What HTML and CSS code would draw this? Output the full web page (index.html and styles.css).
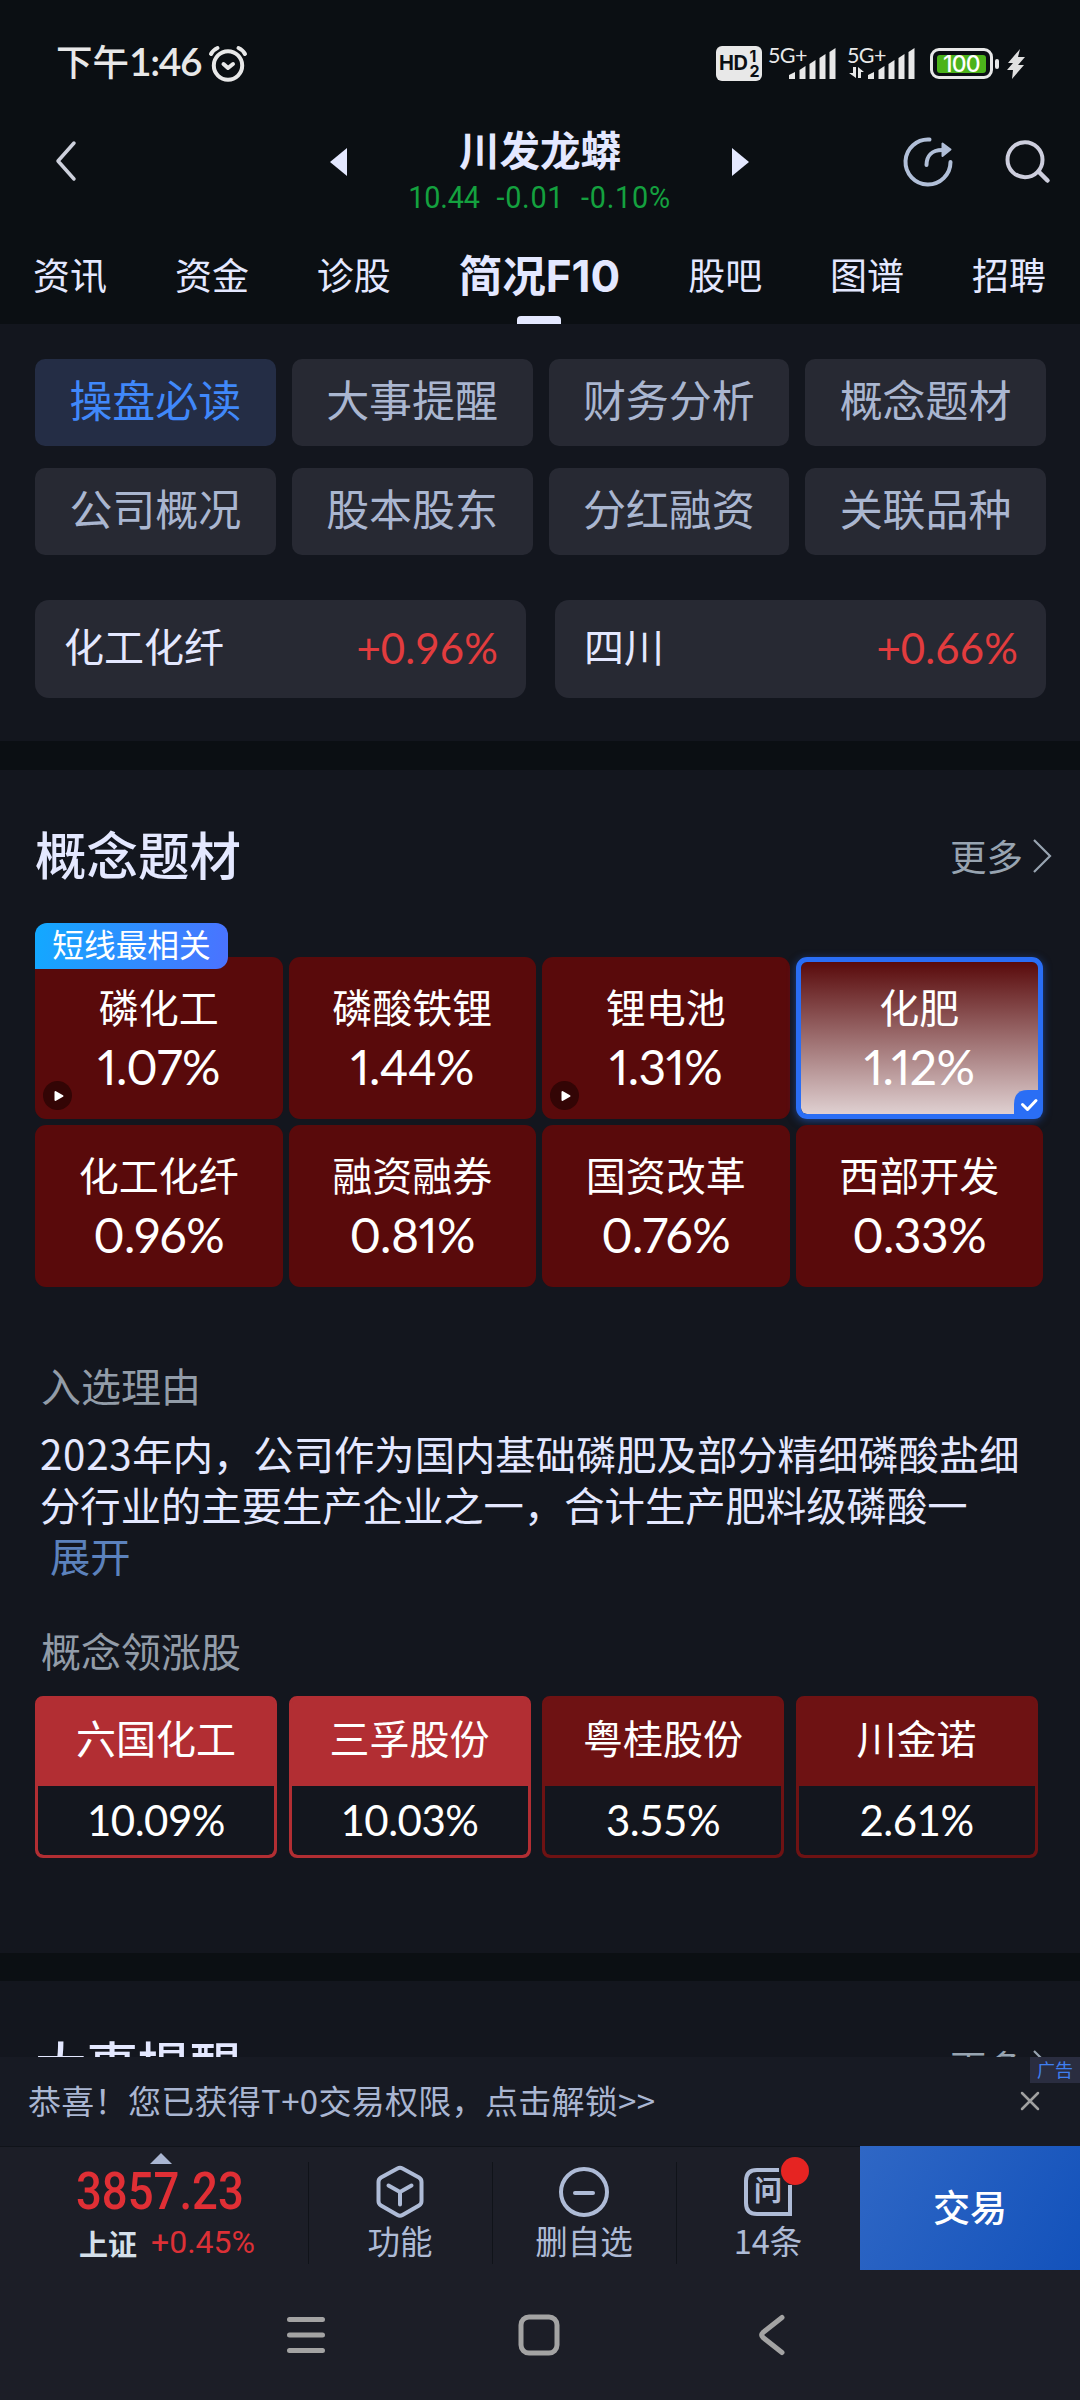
FILE: index.html
```html
<!DOCTYPE html>
<html lang="zh-CN">
<head>
<meta charset="utf-8">
<title>川发龙蟒 - 简况F10</title>
<link rel="stylesheet" href="styles.css">
</head>
<body>
<div class="screen">
  <header class="top">
    <div class="status">
      <div class="clock">下午<span class="clock-num">1:46</span></div>
      <svg class="alarm" width="40" height="38" viewBox="0 0 40 38" fill="none" stroke="#e8e8e8" stroke-linecap="round" stroke-linejoin="round"><circle cx="20" cy="20.5" r="14.2" stroke-width="4"/><path d="M3 9Q5 5 9.500 3M37 9Q35 5 30.500 3" stroke-width="4"/><path d="M15.500 19l4.500 4 5-4" stroke-width="4"/></svg>
      <div class="status-icons">
        <div class="hd"><span>HD</span><div class="hd-sims"><i>1</i><i>2</i></div></div>
        <div class="net"><span>5G+</span><svg width="70" height="36" viewBox="0 0 70 36" fill="#e8e8e8"><path d="M21 29l6-3v7h-6zM31.500 24l6-4v13h-6zM41.500 18l6-4v19h-6zM51.500 12l6-4v25h-6zM61.500 6l6-4v31h-6z"/></svg></div>
        <div class="net"><span>5G+</span><svg width="70" height="36" viewBox="0 0 70 36" fill="#e8e8e8"><path d="M21 29l6-3v7h-6zM31.500 24l6-4v13h-6zM41.500 18l6-4v19h-6zM51.500 12l6-4v25h-6zM61.500 6l6-4v31h-6zM6 21h3v11L2 27h4zM11 32V21l6 5h-3v6z"/></svg></div>
        <div class="battery"><div class="battery-fill">100</div></div>
        <svg class="bolt" width="20" height="32" viewBox="0 0 20 32" fill="#e0e0e0"><path d="M14 1L2 15h5L1 22h6L6 31 18 17h-6l7-8h-7z"/></svg>
      </div>
    </div>
    <div class="titlebar">
      <svg class="back" width="24" height="44" viewBox="0 0 24 44" fill="none" stroke="#cdd0dc" stroke-width="3.500" stroke-linecap="round" stroke-linejoin="round"><path d="M20 4L4 22l16 18"/></svg>
      <svg class="prev" width="17" height="28" viewBox="0 0 17 28"><path d="M17 0v28L0 14z" fill="#e4e8ff"/></svg>
      <div class="stock">
        <h1>川发龙蟒</h1>
        <div class="quote"><span>10.44</span><span>-0.01</span><span>-0.10%</span></div>
      </div>
      <svg class="next" width="17" height="28" viewBox="0 0 17 28"><path d="M0 0v28l17-14z" fill="#e4e8ff"/></svg>
      <svg class="share" width="52" height="52" viewBox="0 0 52 52" fill="none" stroke="#b1bfd8" stroke-width="4" stroke-linecap="round"><path d="M27.500 3.500A22.500 22.500 0 1 0 48.500 26"/><path d="M24.500 29C24.500 20 30 14 40 14"/><path d="M40.500 7.500v12.500l8-6.500z" fill="#b1bfd8" stroke-width="2" stroke-linejoin="round"/></svg>
      <svg class="search" width="48" height="46" viewBox="0 0 48 46" fill="none" stroke="#cdcedd" stroke-width="4" stroke-linecap="round"><circle cx="21" cy="20.700" r="17.500"/><path d="M35 33l8.500 8.500" stroke-width="4.500"/></svg>
    </div>
    <nav class="tabs">
      <span>资讯</span><span>资金</span><span>诊股</span><span class="tab-on">简况<b>F10</b></span><span>股吧</span><span>图谱</span><span>招聘</span>
    </nav>
  </header>

  <main>
    <section class="menu">
      <div class="chips">
        <span class="chip chip-on">操盘必读</span><span class="chip">大事提醒</span><span class="chip">财务分析</span><span class="chip">概念题材</span>
        <span class="chip">公司概况</span><span class="chip">股本股东</span><span class="chip">分红融资</span><span class="chip">关联品种</span>
      </div>
      <div class="boards">
        <div class="board"><span>化工化纤</span><em>+0.96%</em></div>
        <div class="board"><span>四川</span><em>+0.66%</em></div>
      </div>
    </section>

    <section class="concept">
      <div class="section-head"><h2>概念题材</h2><span class="more">更多<svg width="19" height="34" viewBox="0 0 19 34" fill="none" stroke="#98a4b1" stroke-width="2.200"><path d="M1 1l16 16L1 33"/></svg></span></div>
      <div class="tiles">
        <div class="tile"><span class="badge">短线最相关</span><span class="tile-name">磷化工</span><span class="tile-pct">1.07%</span><svg class="play" width="29" height="29" viewBox="0 0 29 29"><circle cx="14.500" cy="14.500" r="14.500" fill="#330505"/><path d="M12.500 11v8l7-4z" fill="#fff" stroke="#fff" stroke-width="2" stroke-linejoin="round"/></svg></div>
        <div class="tile"><span class="tile-name">磷酸铁锂</span><span class="tile-pct">1.44%</span></div>
        <div class="tile"><span class="tile-name">锂电池</span><span class="tile-pct">1.31%</span><svg class="play" width="29" height="29" viewBox="0 0 29 29"><circle cx="14.500" cy="14.500" r="14.500" fill="#330505"/><path d="M12.500 11v8l7-4z" fill="#fff" stroke="#fff" stroke-width="2" stroke-linejoin="round"/></svg></div>
        <div class="tile tile-on"><span class="tile-name">化肥</span><span class="tile-pct">1.12%</span><svg class="check" width="29" height="29" viewBox="0 0 29 29"><path d="M0 29V14Q0 0 14 0H29V19Q29 29 19 29z" fill="#2a6ef5"/><path d="M8.500 14.500l5 5 8.500-9" fill="none" stroke="#fff" stroke-width="3" stroke-linecap="round" stroke-linejoin="round"/></svg></div>
        <div class="tile"><span class="tile-name">化工化纤</span><span class="tile-pct">0.96%</span></div>
        <div class="tile"><span class="tile-name">融资融券</span><span class="tile-pct">0.81%</span></div>
        <div class="tile"><span class="tile-name">国资改革</span><span class="tile-pct">0.76%</span></div>
        <div class="tile"><span class="tile-name">西部开发</span><span class="tile-pct">0.33%</span></div>
      </div>
      <h3>入选理由</h3>
      <p class="reason"><span class="year">2023</span>年内，公司作为国内基础磷肥及部分精细磷酸盐细<br>分行业的主要生产企业之一，合计生产肥料级磷酸一<br><a>展开</a></p>
      <h3 class="leaders-title">概念领涨股</h3>
      <div class="leaders">
        <div class="leader leader-hot"><span>六国化工</span><em>10.09%</em></div>
        <div class="leader leader-hot"><span>三孚股份</span><em>10.03%</em></div>
        <div class="leader"><span>粤桂股份</span><em>3.55%</em></div>
        <div class="leader"><span>川金诺</span><em>2.61%</em></div>
      </div>
    </section>

    <section class="events">
      <div class="section-head"><h2>大事提醒</h2><span class="more">更多<svg width="19" height="34" viewBox="0 0 19 34" fill="none" stroke="#98a4b1" stroke-width="2.200"><path d="M1 1l16 16L1 33"/></svg></span></div>
    </section>
  </main>

  <footer>
    <div class="promo">
      <span>恭喜！您已获得T+0交易权限，点击解锁&gt;&gt;</span>
      <svg width="20" height="20" viewBox="0 0 20 20" stroke="#a0a0a0" stroke-width="2.500" stroke-linecap="round"><path d="M2 2l16 16M18 2L2 18"/></svg>
      <i class="ad">广告</i>
    </div>
    <div class="actions">
      <div class="index">
        <svg width="22" height="11" viewBox="0 0 22 11"><path d="M11 0l11 11H0z" fill="#aab6d2"/></svg>
        <strong>3857.23</strong>
        <div class="index-row"><span>上证</span><em>+0.45%</em></div>
      </div>
      <div class="action">
        <svg width="54" height="54" viewBox="0 0 54 54" fill="none" stroke="#aebbd6" stroke-width="4" stroke-linecap="round" stroke-linejoin="round"><path d="M24.500 3.500Q27 2.200 29.500 3.500L46 12.500Q48.500 14 48.500 17V36Q48.500 39 46 40.500L29.500 50Q27 51.500 24.500 50L8 40.500Q5.500 39 5.500 36V17Q5.500 14 8 12.500z"/><path d="M15.500 20.500L27 27l11.500-6.500M27 27v12.500"/></svg>
        <span>功能</span>
      </div>
      <div class="action">
        <svg width="54" height="54" viewBox="0 0 54 54" fill="none" stroke="#aebbd6" stroke-width="4" stroke-linecap="round"><circle cx="27" cy="27" r="23"/><path d="M18 28h18"/></svg>
        <span>删自选</span>
      </div>
      <div class="action">
        <div class="ask"><svg width="54" height="54" viewBox="0 0 54 54" fill="none" stroke="#aebbd6" stroke-width="4"><path d="M49 20V49H16Q5 49 5 38V16Q5 5 16 5H38"/></svg><b>问</b><i></i></div>
        <span>14条</span>
      </div>
      <div class="trade">交易</div>
    </div>
    <div class="sysnav">
      <svg width="40" height="42" viewBox="0 0 40 42" stroke="#a3a3a3" stroke-width="5" stroke-linecap="round"><path d="M3.500 5.500h33M3.500 21h33M3.500 36.500h33"/></svg>
      <svg width="42" height="42" viewBox="0 0 42 42" fill="none" stroke="#a3a3a3" stroke-width="5"><rect x="3" y="3" width="36" height="36" rx="8"/></svg>
      <svg width="28" height="42" viewBox="0 0 28 42" fill="none" stroke="#a3a3a3" stroke-width="5" stroke-linecap="round" stroke-linejoin="round"><path d="M24 3.500L5 18.500Q2.500 21 5 23.500L24 38.500"/></svg>
    </div>
  </footer>
</div>
</body>
</html>
```
FILE: styles.css
```css
* { box-sizing: border-box; }
body {
  margin: 0;
  background: #13161e;
  color: #e4e8ff;
  font-family: "Noto Sans CJK SC", sans-serif;
}
h1, h2, h3, p { margin: 0; font-weight: 500; }
em, i { font-style: normal; }
svg { display: block; flex: none; }
.screen {
  width: 1080px;
  height: 2400px;
  display: flex;
  flex-direction: column;
  overflow: hidden;
}

/* top area */
.top { flex: none; height: 324px; background: #0b0f13; }
.status {
  height: 123px;
  padding: 2px 54px 0 56px;
  display: flex;
  align-items: center;
  color: #e8e8e8;
}
.clock { font-size: 36.5px; font-weight: 500; line-height: 50px; white-space: nowrap; width: 152px; margin-top: -3px; }
.clock-num { font-family: Lato, sans-serif; font-size: 39px; font-weight: 600; letter-spacing: -1.4px; }
.alarm { margin-top: 2px; }
.status-icons { margin-left: auto; display: flex; align-items: center; height: 36px; margin-top: 2px; }
.hd {
  width: 46px; height: 35px; border-radius: 6px;
  background: #e8e8e8; color: #0b0f13;
  display: flex; align-items: center; justify-content: center; gap: 2px;
  font: 700 20px/35px Inter, sans-serif; letter-spacing: -.5px;
  margin-right: 6px;
}
.hd-sims { display: grid; font-size: 16px; line-height: 15px; }
.net { position: relative; width: 70px; height: 36px; margin-right: 9px; }
.net span { position: absolute; left: 0; top: 0; font: 400 21.500px/18px Lato, sans-serif; letter-spacing: -.6px; }
.battery {
  position: relative; width: 63px; height: 31px; padding: 4px;
  border: 3px solid #e8e8e8; border-radius: 9px; margin: 0 13px 0 4px;
}
.battery::after { content: ""; position: absolute; left: 62px; top: 8px; width: 4px; height: 10px; border-radius: 2px; background: #e8e8e8; }
.battery-fill {
  height: 18px; border-radius: 3px; background: #4cb31b; color: #fff;
  font: 500 23px/19px Inter, sans-serif; text-align: center; letter-spacing: -.8px;
}

.titlebar { height: 107px; padding: 0 20px 0 54px; display: flex; align-items: flex-start; }
.back { margin-top: 16px; margin-right: 252px; }
.prev { margin-top: 25px; }
.next { margin-top: 25px; }
.stock { flex: none; width: 385px; text-align: center; }
.stock h1 { font-size: 40.500px; line-height: 50px; font-weight: 700; margin-top: 1px; padding-left: 1px; }
.quote {
  display: flex; justify-content: center; gap: 18px;
  color: #14a13f; font: 400 31px/34px Roboto, sans-serif; letter-spacing: .8px;
  margin-top: 7px; transform: scaleX(.93);
}
.quote span:first-child { letter-spacing: -.2px; }
.share { margin: 13px 0 0 153px; }
.search { margin: 16px 0 0 50px; }

.tabs { height: 94px; padding: 0 34px 0 33px; display: flex; justify-content: space-between; font-size: 37px; line-height: 88px; }
.tab-on { position: relative; font-size: 43.500px; font-weight: 700; white-space: nowrap; }
.tab-on b { font-family: Inter, sans-serif; font-size: 44px; font-weight: 700; }
.tab-on::after { content: ""; position: absolute; left: 58px; bottom: 0; width: 44px; height: 8px; border-radius: 4px 4px 0 0; background: #e4e8ff; }

/* menu section */
main { flex: none; height: 1733px; overflow: hidden; }
.menu { height: 417px; padding: 35px 34px 0 35px; }
.chips { display: grid; grid-template-columns: repeat(4, 1fr); gap: 22px 16px; }
.chip {
  height: 87px; border-radius: 10px; background: #272933; color: #aab6d0;
  font-size: 43px; line-height: 78px; text-align: center;
}
.chip-on { background: #242d45; color: #4088fa; }
.boards { display: grid; grid-template-columns: 1fr 1fr; gap: 29px; margin-top: 45px; }
.board {
  height: 98px; padding: 0 28px 0 29px; border-radius: 14px; background: #272933;
  display: flex; justify-content: space-between;
  font-size: 40px; line-height: 90px;
}
.board em { color: #e23c3e; font-family: Lato, sans-serif; font-size: 42px; line-height: 96px; letter-spacing: .1px; }

/* concept section */
.concept { height: 1212px; border-top: 29px solid #0b0f13; padding: 0 37px 0 35px; }
.section-head { display: flex; justify-content: space-between; height: 187px; line-height: 166px; }
.section-head h2 { font-size: 51.500px; }
.more { display: flex; align-items: center; height: 172px; gap: 10px; font-size: 36.500px; color: #98a4b1; margin-right: -9px; }
.tiles { display: grid; grid-template-columns: repeat(4, 1fr); gap: 6px; }
.tile {
  position: relative; height: 162px; border-radius: 11px; background: #590a0b; color: #fff;
  display: flex; flex-direction: column; align-items: center; padding-top: 24px;
}
.tile-name { font-size: 40px; line-height: 50px; }
.tile-pct { font-family: Lato, sans-serif; font-size: 48px; line-height: 60px; letter-spacing: -.5px; margin-top: 6px; font-variant-numeric: proportional-nums; }
.badge {
  position: absolute; left: 0; top: -34px; width: 193px; height: 46px;
  border-radius: 12px 12px 12px 0; background: linear-gradient(100deg, #12a9ff, #4b72ff);
  font-size: 31.700px; line-height: 41px; text-align: center;
}
.play { position: absolute; left: 8px; bottom: 9px; }
.check { position: absolute; right: -5px; bottom: -5px; }
.tile-on {
  border: 5px solid #2a6ef5; padding-top: 19px;
  background: linear-gradient(#590a0b, #dfd0d1) padding-box;
  box-shadow: 0 2px 8px rgba(42, 110, 245, .5);
}
h3 { font-size: 40px; line-height: 52px; font-weight: 400; color: #929ca8; padding-left: 6px; margin-top: 72px; }
.reason { font-size: 40.350px; font-weight: 400; line-height: 51px; padding-left: 5px; margin: 16px -20px 0 0; white-space: nowrap; }
.year { letter-spacing: .7px; }
.reason a { color: #5c82bd; margin-left: 10px; }
.leaders-title { margin-top: 44px; }
.leaders { display: grid; grid-template-columns: repeat(4, 242px); gap: 11.500px; margin-top: 20px; }
.leader {
  height: 162px; border: 3px solid #6e1213; border-radius: 8px; background: #6e1213;
  color: #fff; text-align: center; display: flex; flex-direction: column; overflow: hidden;
}
.leader-hot { background: #b22e33; border-color: #b22e33; }
.leader span { height: 87px; font-size: 40px; line-height: 77px; }
.leader em { flex: 1; border-radius: 0 0 6px 6px; background: #13161e; font-family: Lato, sans-serif; font-size: 42px; line-height: 68px; letter-spacing: -.5px; }

.events { border-top: 28px solid #0b0f13; padding: 0 37px 0 35px; }
.events h2 { margin-top: -1px; }

/* footer */
footer { height: 343px; background: #1c1e27; }
.promo {
  position: relative; height: 89px; padding: 0 40px 0 28px; background: #171a23;
  display: flex; justify-content: space-between; align-items: center;
  color: #aab6d2; font-size: 33px; line-height: 82px;
}
.promo > span { margin-top: -4px; white-space: nowrap; letter-spacing: .3px; }
.promo > svg { margin-top: -1px; }
.ad {
  position: absolute; right: 0; top: 0; width: 50px; height: 26px; background: #2a2d40;
  color: #3f7ff0; font-size: 18px; line-height: 24px; text-align: center;
}
.actions { display: flex; height: 124px; border-top: 1px solid #101319; }
.index { width: 308px; padding: 6px 0 0; display: flex; flex-direction: column; }
.index > svg { margin-left: 150px; }
.index strong {
  font: 500 52px/52px Roboto, sans-serif; color: #e02f35;
  transform: scaleX(.875); transform-origin: 0 0; margin: 2px 0 0 76px;
}
.index-row { display: flex; padding-left: 79px; gap: 14px; line-height: 40px; margin-top: 5px; }
.index-row span { font-size: 29px; font-weight: 700; color: #d5e0ea; }
.index-row em { font-family: Roboto, sans-serif; font-size: 32px; color: #dc3036; letter-spacing: 0; line-height: 39px; }
.action {
  position: relative; width: 184px; padding-top: 18px;
  display: flex; flex-direction: column; align-items: center;
  color: #aebbd6; font-size: 32.500px; line-height: 42px;
}
.action::before { content: ""; position: absolute; left: 0; top: 15px; width: 1px; height: 102px; background: #101319; }
.ask { position: relative; }
.ask b { position: absolute; left: 0; top: 0; width: 54px; font-size: 28px; line-height: 48px; text-align: center; font-weight: 700; }
.ask i { position: absolute; left: 40px; top: -8px; width: 28px; height: 28px; border-radius: 50%; background: #e62422; }
.trade {
  flex: 1; margin-top: -1px; height: 124px; background: linear-gradient(120deg, #2f67c5, #1352bb);
  color: #fff; font-size: 37px; font-weight: 500; line-height: 120px; text-align: center;
}
.sysnav { display: flex; align-items: center; padding: 44px 0 0 286px; gap: 192px; }
.sysnav svg:last-child { margin-left: 6px; }
```
